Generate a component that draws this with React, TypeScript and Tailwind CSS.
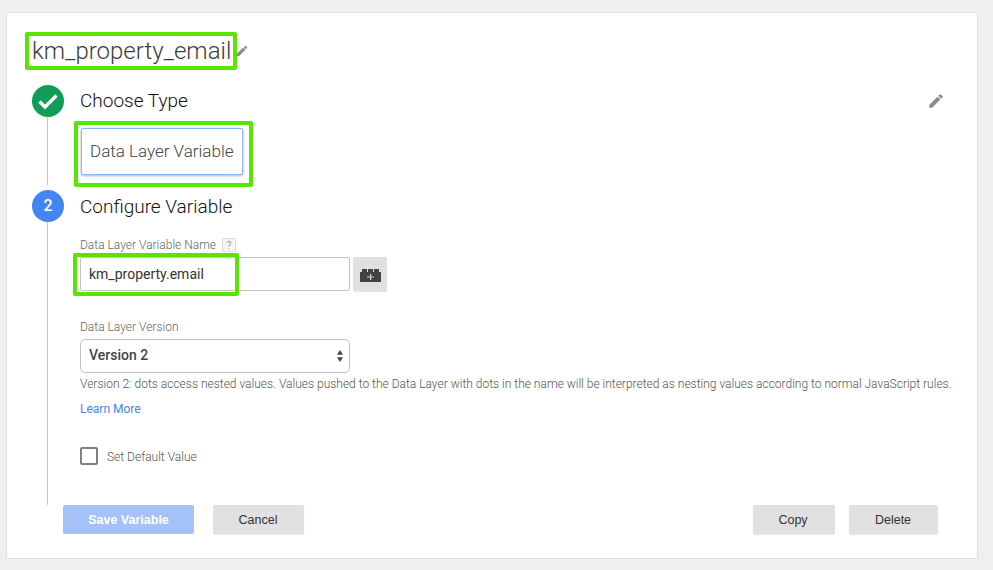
import React from "react";

const Pencil = ({ className }: { className: string }) => (
  <svg viewBox="0 0 24 24" className={className} fill="#8a8a8a">
    <path d="M3 17.25V21h3.75L17.81 9.94l-3.75-3.75L3 17.25zM20.71 7.04a1 1 0 0 0 0-1.41l-2.34-2.34a1 1 0 0 0-1.41 0l-1.83 1.83 3.75 3.75 1.83-1.83z" />
  </svg>
);

export default function App() {
  return (
    <div className="w-[993px] h-[570px] overflow-hidden bg-[#efefef] pt-3 pl-[6px] font-['Roboto',sans-serif]">
      <div className="w-[972px] h-[547px] bg-white border border-[#e0e0e0] rounded-[1px] flex flex-col pt-[19px] relative">
        <div className="flex items-center ml-[18px] h-[38px]">
          <div className="h-[38px] w-[212px] border-[4px] border-[#56e600] rounded-[2px] flex items-center pl-[3px]">
            <span className="text-[24px] leading-none font-light text-[#3c3c3c] whitespace-nowrap">km_property_email</span>
          </div>
          <Pencil className="w-[14px] h-[14px] ml-[-2px]" />
        </div>

        <div className="flex ml-[25px] mt-[15px] h-[105px]">
          <div className="w-[32px] flex flex-col items-center shrink-0">
            <div className="w-[32px] h-[32px] rounded-full bg-[#0f9d58] flex items-center justify-center">
              <svg viewBox="0 0 24 24" className="w-[24px] h-[24px]" fill="none" stroke="#fff" strokeWidth="3.4">
                <path d="M3.5 12.5l5.5 5.5L20.5 6.5" />
              </svg>
            </div>
            <div className="w-px flex-1 bg-[#c8c8c8] mb-[5px] mr-[1px]" />
          </div>
          <div className="flex-1 ml-[10px] relative">
            <div className="flex items-center justify-between h-[32px] pl-[6px] pr-[32px]">
              <span className="text-[19px] leading-[30px] font-light text-[#111]">Choose Type</span>
              <Pencil className="w-[18px] h-[18px]" />
            </div>
            <div className="w-[179px] h-[66px] mt-[4px] border-[4px] border-[#56e600] rounded-[2px] pt-[3px] pl-[3px]">
              <div className="w-[162px] h-[47px] bg-white border border-[#8ab4f8] rounded-[2px] shadow-[0_1px_3px_rgba(0,0,0,0.3)] flex items-center pl-[8px]">
                <span className="text-[17px] font-light text-[#444] whitespace-nowrap">Data Layer Variable</span>
              </div>
            </div>
          </div>
        </div>

        <div className="flex ml-[25px] h-[315px]">
          <div className="w-[32px] flex flex-col items-center shrink-0">
            <div className="w-[32px] h-[32px] rounded-full bg-[#4285f4] flex items-center justify-center text-white text-[16px] font-medium">2</div>
            <div className="w-px flex-1 bg-[#c8c8c8] mr-[1px]" />
          </div>
          <div className="flex-1 ml-[16px]">
            <div className="h-[32px] flex items-center">
              <span className="text-[19px] leading-[30px] mt-[2px] font-light text-[#111]">Configure Variable</span>
            </div>
            <div className="mt-[16px] h-[14px] flex items-center text-[12px] text-[#666] font-light">
              <span>Data Layer Variable Name</span>
              <span className="ml-[6px] w-[14px] h-[14px] border border-[#ddd] bg-[#f5f5f5] text-[10px] flex items-center justify-center text-[#666]">?</span>
            </div>
            <div className="flex mt-[5px] relative">
              <div className="w-[270px] h-[34px] border border-[#c4c4c4] rounded-[2px] flex items-center pl-[8px] text-[14px] text-[#333]">km_property.email</div>
              <div className="w-[34px] h-[34px] ml-[3px] bg-[#e1e1e1] rounded-[2px] shadow-[0_1px_1px_rgba(0,0,0,0.1)] flex items-center justify-center">
                <svg viewBox="0 0 21 13" className="w-[21px] h-[13px] mt-[2px]">
                  <path d="M0 3h2V0h5v3h1V0h5v3h1V0h5v3h2v10H0z" fill="#424242" />
                  <path d="M10 5h1.2v2.4h2.8v1.2h-2.8V11H10V8.600H7V7.400h3z" fill="#d4d4d4" />
                </svg>
              </div>
              <div className="absolute left-[-7px] top-[-4px] w-[166px] h-[43px] border-[4px] border-[#56e600] rounded-[2px]" />
            </div>
            <div className="mt-[29px] text-[12px] leading-[14px] text-[#666] font-light">Data Layer Version</div>
            <div className="mt-[5px] w-[270px] h-[34px] border border-[#c4c4c4] rounded-[5px] flex items-center justify-between pl-[8px] pr-[5px] text-[14px] font-medium text-[#444]">
              <span className="mb-[2px]">Version 2</span>
              <svg viewBox="0 0 8 14" className="w-[8px] h-[12px]" fill="#444">
                <path d="M4 0l3.5 5.5h-7zM4 14L.5 8.5h7z" />
              </svg>
            </div>
            <div className="mt-[4px] text-[12px] leading-[14px] text-[#555] whitespace-nowrap font-light">Version 2: dots access nested values. Values pushed to the Data Layer with dots in the name will be interpreted as nesting values according to normal JavaScript rules.</div>
            <div className="mt-[11px] text-[12px] leading-[14px] text-[#4285f4]">Learn More</div>
            <div className="mt-[31px] flex items-center h-[18px]">
              <span className="w-[18px] h-[18px] border-2 border-[#7f7f7f] rounded-[2px]" />
              <span className="ml-[9px] text-[12px] leading-[18px] mt-[1px] text-[#555] font-light">Set Default Value</span>
            </div>
          </div>
        </div>

        <div className="flex ml-[56px] mr-[39px] font-['Liberation_Sans',sans-serif] text-[12.5px] h-[29px]">
          <button className="w-[131px] h-[29px] pt-[1px] bg-[#a4c2f8] text-white font-bold rounded-[2px]">Save Variable</button>
          <button className="w-[91px] h-[29px] pt-[1px] pr-[1px] ml-[19px] bg-[#e1e1e1] text-[#333] rounded-[2px] shadow-[0_1px_1px_rgba(0,0,0,0.1)]">Cancel</button>
          <button className="w-[82px] h-[29px] pt-[1px] pr-[2px] ml-auto bg-[#e1e1e1] text-[#333] rounded-[2px] shadow-[0_1px_1px_rgba(0,0,0,0.1)]">Copy</button>
          <button className="w-[89px] h-[29px] pt-[1px] pr-[1px] ml-[14px] bg-[#e1e1e1] text-[#333] rounded-[2px] shadow-[0_1px_1px_rgba(0,0,0,0.1)]">Delete</button>
        </div>
      </div>
    </div>
  );
}
